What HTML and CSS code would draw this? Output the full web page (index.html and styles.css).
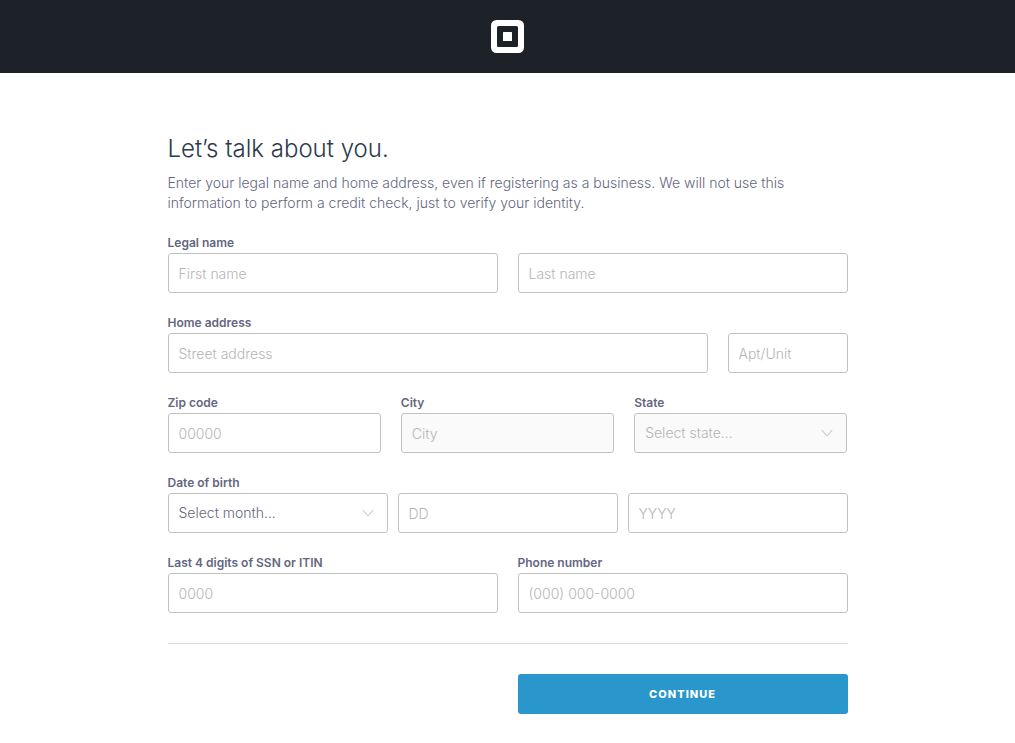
FILE: index.html
```html
<!DOCTYPE html>
<html lang="en">
<head>
<meta charset="utf-8">
<meta name="viewport" content="width=device-width, initial-scale=1">
<title>Let’s talk about you</title>
<link rel="stylesheet" href="styles.css">
</head>
<body>
<header class="topbar">
  <svg class="logo" viewBox="0 0 33 33" role="img" aria-label="Square">
    <path fill="#fff" fill-rule="evenodd" d="M5.500 0h22a5.500 5.500 0 0 1 5.500 5.500v22a5.500 5.500 0 0 1-5.500 5.500h-22a5.500 5.500 0 0 1-5.500-5.500v-22a5.500 5.500 0 0 1 5.500-5.500zM7.500 6a1.500 1.500 0 0 0-1.500 1.500v18a1.500 1.500 0 0 0 1.500 1.500h18a1.500 1.500 0 0 0 1.500-1.500v-18a1.500 1.500 0 0 0-1.500-1.500zM12.500 12h8a.5.500 0 0 1 .5.500v8a.5.500 0 0 1-.5.500h-8a.5.500 0 0 1-.5-.5v-8a.5.500 0 0 1 .5-.5z"/>
  </svg>
</header>
<main class="page">
  <h1 class="title">Let’s talk about you.</h1>
  <p class="intro">Enter your legal name and home address, even if registering as a business. We will not use this information to perform a credit check, just to verify your identity.</p>
  <form class="form">
    <div class="field">
      <label class="label" for="first">Legal name</label>
      <div class="row halves">
        <input class="control" id="first" type="text" placeholder="First name">
        <input class="control" type="text" placeholder="Last name" aria-label="Last name">
      </div>
    </div>
    <div class="field">
      <label class="label" for="street">Home address</label>
      <div class="row address">
        <input class="control" id="street" type="text" placeholder="Street address">
        <input class="control" type="text" placeholder="Apt/Unit" aria-label="Apt/Unit">
      </div>
    </div>
    <div class="row thirds">
      <div class="field">
        <label class="label" for="zip">Zip code</label>
        <input class="control" id="zip" type="text" placeholder="00000">
      </div>
      <div class="field">
        <label class="label" for="city">City</label>
        <input class="control" id="city" type="text" placeholder="City" disabled>
      </div>
      <div class="field">
        <label class="label" for="state">State</label>
        <div class="picker">
          <select class="control" id="state" disabled><option>Select state...</option></select>
          <svg class="chevron" viewBox="0 0 12 8" aria-hidden="true"><path d="M.7 1 6 6.800 11.300 1"/></svg>
        </div>
      </div>
    </div>
    <div class="field">
      <label class="label" for="month">Date of birth</label>
      <div class="row thirds tight">
        <div class="picker">
          <select class="control" id="month"><option>Select month...</option></select>
          <svg class="chevron" viewBox="0 0 12 8" aria-hidden="true"><path d="M.7 1 6 6.800 11.300 1"/></svg>
        </div>
        <input class="control" type="text" placeholder="DD" aria-label="Day">
        <input class="control" type="text" placeholder="YYYY" aria-label="Year">
      </div>
    </div>
    <div class="row halves">
      <div class="field">
        <label class="label" for="ssn">Last 4 digits of SSN or ITIN</label>
        <input class="control" id="ssn" type="text" placeholder="0000">
      </div>
      <div class="field">
        <label class="label" for="phone">Phone number</label>
        <input class="control" id="phone" type="tel" placeholder="(000) 000-0000">
      </div>
    </div>
    <div class="actions row halves">
      <button class="submit" type="submit">CONTINUE</button>
    </div>
  </form>
</main>
</body>
</html>
```
FILE: styles.css
```css
* { box-sizing: border-box; }

body {
  margin: 0;
  background: #fff;
  color: #63677f;
  font: 300 14px/20px Inter, "Liberation Sans", sans-serif;
}

.topbar {
  display: flex;
  justify-content: center;
  padding: 20px;
  background: #1d2228;
}

.logo { display: block; width: 33px; height: 33px; }

.page {
  max-width: 720px;
  margin: 0 auto;
  padding: 60px 20px 29px;
}

.title {
  margin: 0 0 8px;
  color: #2b3a4c;
  font-size: 24px;
  font-weight: 300;
  line-height: 32px;
}

.intro { margin: 0 0 20px; }

.form { display: grid; gap: 20px; }

.field { display: grid; min-width: 0; }

.label {
  color: #63677f;
  font-size: 12px;
  font-weight: 600;
  line-height: 20px;
}

.row { display: grid; gap: 20px; }
.halves { grid-template-columns: repeat(2, minmax(0, 1fr)); }
.thirds { grid-template-columns: repeat(3, minmax(0, 1fr)); }
.address { grid-template-columns: minmax(0, 1fr) 120px; }
.tight { gap: 10px; }

.control {
  width: 100%;
  height: 40px;
  margin: 0;
  padding: 0 10px;
  border: 1px solid #c2c2c2;
  border-radius: 3px;
  background: #fff;
  color: #63677f;
  font: inherit;
  appearance: none;
}

.control::placeholder { color: #b5b5b5; opacity: 1; }

.control:disabled {
  background: #fafafa;
  color: #b5b5b5;
  opacity: 1;
}

.picker { position: relative; }

.chevron {
  position: absolute;
  top: 16px;
  right: 14px;
  width: 12px;
  height: 8px;
  fill: none;
  stroke: #b8b8b8;
  pointer-events: none;
}

.actions {
  margin-top: 10px;
  padding-top: 30px;
  border-top: 1px solid #ddd;
}

.submit {
  grid-column: 2;
  height: 40px;
  border: 0;
  border-radius: 3px;
  background: #2996cc;
  color: #fff;
  font: 800 11px/20px Inter, "Liberation Sans", sans-serif;
  letter-spacing: 1px;
}
```
